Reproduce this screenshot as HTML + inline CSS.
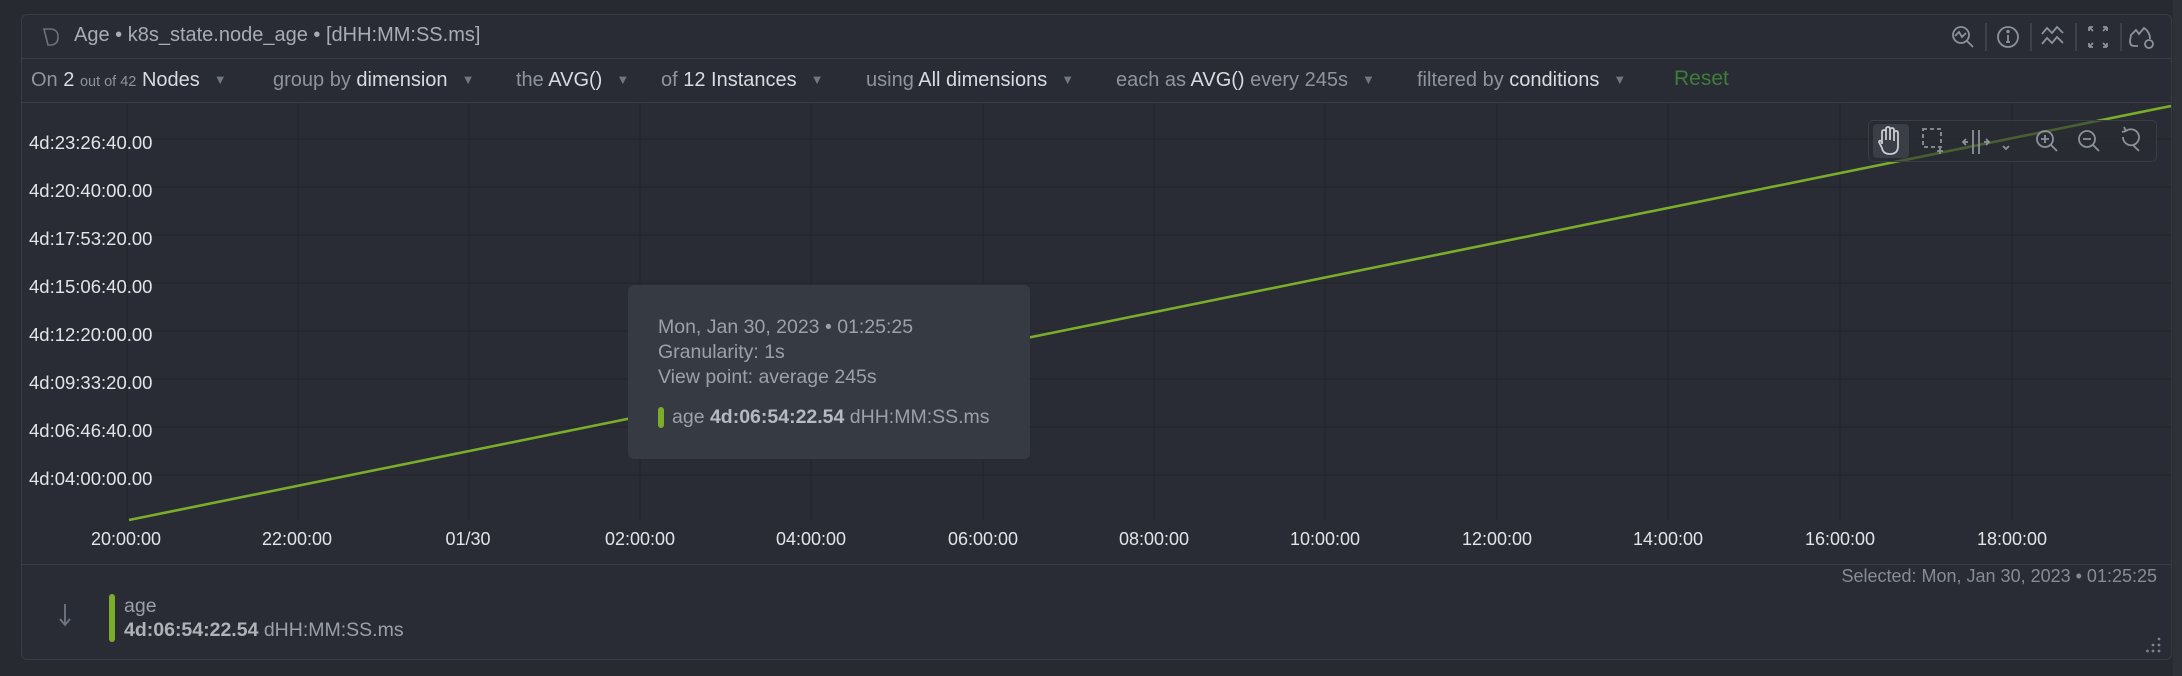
<!DOCTYPE html>
<html><head><meta charset="utf-8"><style>
*{margin:0;padding:0;box-sizing:border-box}
body{width:2182px;height:676px;background:#272a31;font-family:"Liberation Sans",sans-serif;overflow:hidden;position:relative}
.card{position:absolute;left:21px;top:14px;width:2151px;height:646px;background:#292c34;border:1px solid #383c45;border-radius:6px}
.a{position:absolute;white-space:nowrap}
.tb{font-size:20px;color:#8e949d;top:69px}
.w{color:#d8dbe0}
.chev{color:#6f7883;font-size:13px;margin-left:14px;position:relative;top:-2px}
.hl{position:absolute;left:22px;width:2149px;height:1px;background:#393d46}
.yl{position:absolute;left:29px;font-size:18.5px;color:#e2e4e8}
.xl{position:absolute;top:529px;font-size:18px;color:#e2e4e8;transform:translateX(-50%)}
.tt{font-size:19.5px;color:#9ba1aa;position:absolute;left:658px}
</style></head><body>
<div class="card"></div>
<div style="position:absolute;right:0;top:0;width:9px;height:676px;background:#2e3138"></div>

<svg class="a" style="left:42px;top:27px" width="18" height="20" viewBox="0 0 18 20"><path d="M2 2 L8 2 Q16 2 16 10 Q16 18 8 18 L6 18 Z" fill="none" stroke="#6b727c" stroke-width="1.6"/></svg>
<div class="a" style="left:74px;top:24px;font-size:20px;color:#a7adb5">Age • k8s_state.node_age • [dHH:MM:SS.ms]</div>

<svg class="a" style="left:1950px;top:22px" width="210" height="30" viewBox="0 0 210 30" fill="none" stroke="#8b929b" stroke-width="1.8">
<circle cx="11" cy="13" r="8"/><path d="M17 19 L23 25"/><path d="M5 14 L9 10 L12 15 L16 11"/>
<line x1="36" y1="1" x2="36" y2="29" stroke="#3f444d"/>
<circle cx="58" cy="15" r="10"/><path d="M58 13 V20 M56 20 H60"/><circle cx="58" cy="9.5" r="0.8" fill="#8b929b"/>
<line x1="81" y1="1" x2="81" y2="29" stroke="#3f444d"/>
<path d="M92 12 L97 6 L102 11 L107 5 L113 11 M92 22 L97 16 L102 21 L107 15 L113 21"/>
<line x1="126" y1="1" x2="126" y2="29" stroke="#3f444d"/>
<path d="M139 5 H143 M139 5 V9 M139 5 L143 9 M157 5 H153 M157 5 V9 M157 5 L153 9 M139 25 H143 M139 25 V21 M139 25 L143 21 M157 25 H153 M157 25 V21 M157 25 L153 21"/>
<line x1="171" y1="1" x2="171" y2="29" stroke="#3f444d"/>
<path d="M188 24 H184 Q180 24 180 19 L181 13 L186 8 L189 12 L194 6 Q200 10 200 17"/><circle cx="199" cy="22" r="4"/>
</svg>

<div class="hl" style="top:58px"></div>

<div class="a tb" style="left:31px">On <span class="w">2</span> <span style="font-size:14.5px">out of 42</span> <span class="w">Nodes</span><span class="chev">▼</span></div>
<div class="a tb" style="left:273px">group by <span class="w">dimension</span><span class="chev">▼</span></div>
<div class="a tb" style="left:516px">the <span class="w">AVG()</span><span class="chev">▼</span></div>
<div class="a tb" style="left:661px">of <span class="w">12 Instances</span><span class="chev">▼</span></div>
<div class="a tb" style="left:866px">using <span class="w">All dimensions</span><span class="chev">▼</span></div>
<div class="a tb" style="left:1116px">each as <span class="w">AVG()</span> every 245s<span class="chev">▼</span></div>
<div class="a tb" style="left:1417px">filtered by <span class="w">conditions</span><span class="chev">▼</span></div>
<div class="a tb" style="left:1674px;color:#3e7d3a;font-size:21px;top:67px">Reset</div>

<div class="hl" style="top:102px"></div>

<svg class="a" style="left:0;top:0" width="2172" height="676">
<g stroke="#24272d" stroke-width="1.5">
<line x1="30" y1="139" x2="2171" y2="139"/><line x1="30" y1="187" x2="2171" y2="187"/>
<line x1="30" y1="235" x2="2171" y2="235"/><line x1="30" y1="283" x2="2171" y2="283"/>
<line x1="30" y1="331" x2="2171" y2="331"/><line x1="30" y1="379" x2="2171" y2="379"/>
<line x1="30" y1="427" x2="2171" y2="427"/><line x1="30" y1="475" x2="2171" y2="475"/>
<line x1="127" y1="103" x2="127" y2="520"/><line x1="298" y1="103" x2="298" y2="520"/>
<line x1="469" y1="103" x2="469" y2="520"/><line x1="640" y1="103" x2="640" y2="520"/>
<line x1="811" y1="103" x2="811" y2="520"/><line x1="983" y1="103" x2="983" y2="520"/>
<line x1="1154" y1="103" x2="1154" y2="520"/><line x1="1325" y1="103" x2="1325" y2="520"/>
<line x1="1497" y1="103" x2="1497" y2="520"/><line x1="1668" y1="103" x2="1668" y2="520"/>
<line x1="1840" y1="103" x2="1840" y2="520"/><line x1="2012" y1="103" x2="2012" y2="520"/>
</g>
<line x1="129" y1="520" x2="2171" y2="106" stroke="#7cad2a" stroke-width="2.6"/>
</svg>

<div class="yl" style="top:132px">4d:23:26:40.00</div>
<div class="yl" style="top:180px">4d:20:40:00.00</div>
<div class="yl" style="top:228px">4d:17:53:20.00</div>
<div class="yl" style="top:276px">4d:15:06:40.00</div>
<div class="yl" style="top:324px">4d:12:20:00.00</div>
<div class="yl" style="top:372px">4d:09:33:20.00</div>
<div class="yl" style="top:420px">4d:06:46:40.00</div>
<div class="yl" style="top:468px">4d:04:00:00.00</div>

<div class="xl" style="left:126px">20:00:00</div>
<div class="xl" style="left:297px">22:00:00</div>
<div class="xl" style="left:468px">01/30</div>
<div class="xl" style="left:640px">02:00:00</div>
<div class="xl" style="left:811px">04:00:00</div>
<div class="xl" style="left:983px">06:00:00</div>
<div class="xl" style="left:1154px">08:00:00</div>
<div class="xl" style="left:1325px">10:00:00</div>
<div class="xl" style="left:1497px">12:00:00</div>
<div class="xl" style="left:1668px">14:00:00</div>
<div class="xl" style="left:1840px">16:00:00</div>
<div class="xl" style="left:2012px">18:00:00</div>

<div class="a" style="left:1868px;top:120px;width:289px;height:42px;border:1px solid #393d46;border-radius:5px;background:rgba(41,44,52,0.6)"></div>
<div class="a" style="left:1873px;top:124px;width:36px;height:34px;background:#3a3e47;border-radius:4px"></div>
<svg class="a" style="left:1870px;top:122px" width="285" height="40" viewBox="0 0 285 40" fill="none" stroke="#8b929b" stroke-width="1.8">
<path d="M12 22 V10 Q12 8 14 8 Q16 8 16 10 V18 M16 18 V7 Q16 5 18 5 Q20 5 20 7 V18 M20 18 V8 Q20 6 22 6 Q24 6 24 8 V19 M24 19 V11 Q24 9 26 9 Q28 9 28 11 V24 Q28 32 20 32 Q13 32 12 26 L9 20 Q9 18 11 19 L12 21" stroke="#c9cdd3"/>
<rect x="53" y="7" width="18" height="18" stroke-dasharray="4 3"/><path d="M70 26 V32 M67 29 H73"/>
<path d="M103 8 V32 M109 8 V32 M98 20 H94 M96 17 L93 20 L96 23 M114 20 H118 M116 17 L119 20 L116 23"/>
<path d="M133 24 L136 27 L139 24"/>
<circle cx="175" cy="17" r="8"/><path d="M181 23 L187 29 M175 13 V21 M171 17 H179"/>
<circle cx="217" cy="17" r="8"/><path d="M223 23 L229 29 M213 17 H221"/>
<path d="M256 9 A8 8 0 1 1 253 15 M256 9 L254 5 M256 9 L252 10 M263 23 L269 29"/>
</svg>

<div class="a" style="left:628px;top:285px;width:402px;height:174px;background:#363a43;border-radius:6px"></div>
<div class="tt" style="top:316px">Mon, Jan 30, 2023 • 01:25:25</div>
<div class="tt" style="top:341px">Granularity: 1s</div>
<div class="tt" style="top:366px">View point: average 245s</div>
<div class="a" style="left:658px;top:407px;width:6px;height:21px;background:#7cad2a;border-radius:3px"></div>
<div class="tt" style="top:406px;left:672px">age <b style="color:#b5bac1">4d:06:54:22.54</b> dHH:MM:SS.ms</div>

<div class="hl" style="top:564px"></div>
<div class="a" style="right:25px;top:566px;font-size:18px;color:#868c95">Selected: Mon, Jan 30, 2023 • 01:25:25</div>

<svg class="a" style="left:57px;top:602px" width="16" height="26" fill="none" stroke="#6f7782" stroke-width="1.8"><path d="M8 2 V23 M3 17 L8 23 L13 17"/></svg>
<div class="a" style="left:109px;top:594px;width:6px;height:48px;background:#7cad2a;border-radius:3px"></div>
<div class="a" style="left:124px;top:595px;font-size:19.5px;color:#9aa0a9">age</div>
<div class="a" style="left:124px;top:619px;font-size:19.5px;color:#9aa0a9"><b style="color:#aeb3ba">4d:06:54:22.54</b> dHH:MM:SS.ms</div>

<svg class="a" style="left:2146px;top:636px" width="16" height="18" fill="#7b828c"><circle cx="13" cy="3" r="1.4"/><circle cx="13" cy="9" r="1.4"/><circle cx="7" cy="9" r="1.4"/><circle cx="13" cy="15" r="1.4"/><circle cx="7" cy="15" r="1.4"/><circle cx="1.5" cy="15" r="1.4"/></svg>
</body></html>
